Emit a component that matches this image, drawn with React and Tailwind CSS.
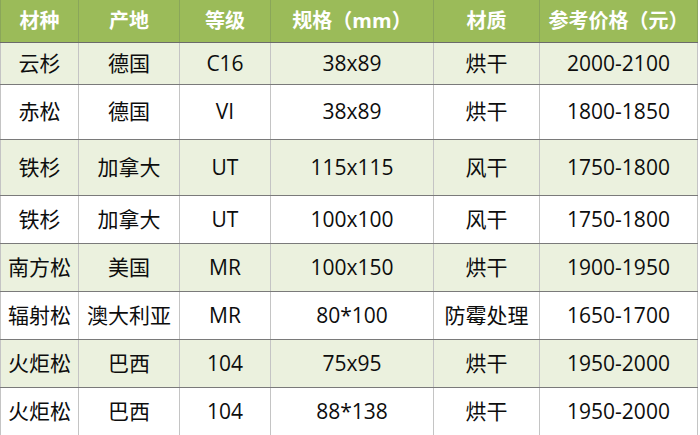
const rows = [
  ["云杉", "德国", "C16", "38x89", "烘干", "2000-2100", 42, true],
  ["赤松", "德国", "VI", "38x89", "烘干", "1800-1850", 55, false],
  ["铁杉", "加拿大", "UT", "115x115", "风干", "1750-1800", 56, true],
  ["铁杉", "加拿大", "UT", "100x100", "风干", "1750-1800", 48, false],
  ["南方松", "美国", "MR", "100x150", "烘干", "1900-1950", 48, true],
  ["辐射松", "澳大利亚", "MR", "80*100", "防霉处理", "1650-1700", 48, false],
  ["火炬松", "巴西", "104", "75x95", "烘干", "1950-2000", 48, true],
  ["火炬松", "巴西", "104", "88*138", "烘干", "1950-2000", 48, false],
];

const headers = ["材种", "产地", "等级", "规格（mm）", "材质", "参考价格（元）"];
const widths = [78, 101, 91, 163, 106, 158];

export default function App() {
  return (
    <div className="h-[435px] w-[700px] overflow-hidden bg-white" style={{ fontFamily: '"Open Sans", "Noto Sans CJK SC", sans-serif' }}>
      <table className="table-fixed border-collapse text-center">
        <colgroup>
          {widths.map((w, i) => <col key={i} style={{ width: w }} />)}
        </colgroup>
        <thead>
          <tr className="h-[42px] bg-[#9bbb59]">
            {headers.map((h) => (
              <th key={h} className="whitespace-nowrap border-x border-b border-x-[#8aa65a] border-b-[#6b6b6b] p-0 text-[20px] font-bold text-white">
                {h}
              </th>
            ))}
          </tr>
        </thead>
        <tbody>
          {rows.map((r, i) => (
            <tr key={i} className={r[7] ? "bg-[#ebf1de]" : "bg-white"} style={{ height: r[6] }}>
              {r.slice(0, 6).map((c, j) => (
                <td key={j} className="whitespace-nowrap border-x border-b border-x-[#c4c4c4] border-b-[#7a7a7a] p-0 text-[21px] leading-none text-[#0d0d0d]">
                  {c}
                </td>
              ))}
            </tr>
          ))}
        </tbody>
      </table>
    </div>
  );
}
